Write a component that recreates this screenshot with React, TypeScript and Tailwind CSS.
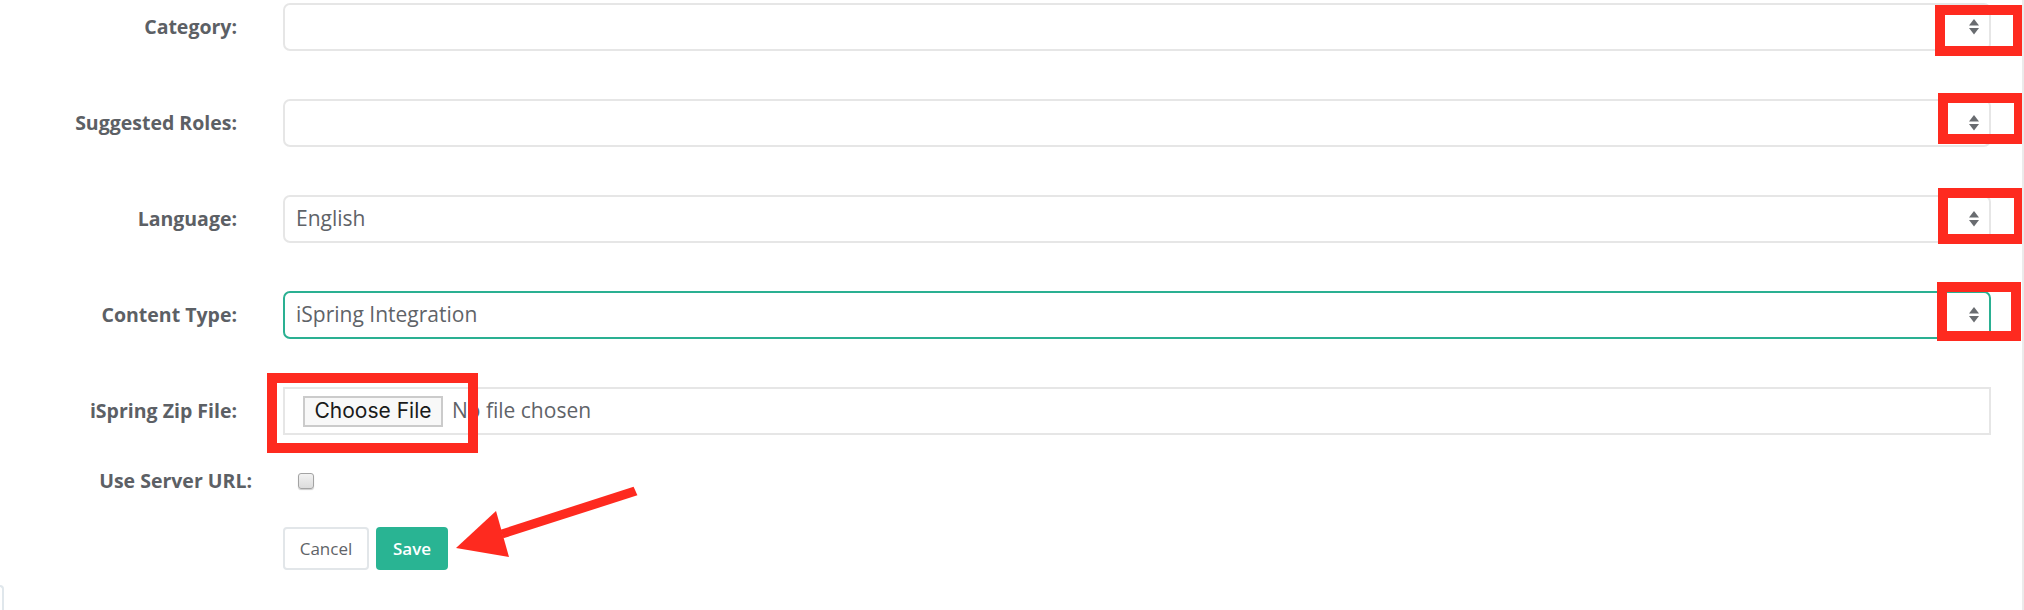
import React from "react";

const labelCls =
  "w-[237px] shrink-0 text-right font-bold text-[19.5px] text-[#5c6065] leading-none";

function Chevrons() {
  return (
    <svg width="10" height="16" viewBox="0 0 10 16" className="shrink-0">
      <polygon points="5,0 10,6.5 0,6.5" fill="#696c70" />
      <polygon points="0,9 10,9 5,15.5" fill="#696c70" />
    </svg>
  );
}

function SelectField({ value, active }: { value?: string; active?: boolean }) {
  return (
    <div
      className={
        "w-[1708px] h-[48px] rounded-[7px] border-2 flex items-center pl-[11px] pr-[10px] " +
        (active ? "border-[#2ab092]" : "border-[#e6e6e6]")
      }
    >
      <span className="flex-1 text-[21px] text-[#5f6368]">{value}</span>
      <Chevrons />
    </div>
  );
}

function Row({ label, children }: { label: string; children: React.ReactNode }) {
  return (
    <div className="flex items-center gap-[46px]">
      <div className={labelCls}>{label}</div>
      {children}
    </div>
  );
}

export default function App() {
  return (
    <div
      className="relative w-[2024px] h-[610px] bg-white overflow-hidden border-r-2 border-[#ebebeb]"
      style={{ fontFamily: '"Open Sans", sans-serif' }}
    >
      <div className="flex flex-col pt-[3px]">
        <div className="flex flex-col gap-[48px]">
          <Row label="Category:">
            <SelectField />
          </Row>
          <Row label="Suggested Roles:">
            <SelectField />
          </Row>
          <Row label="Language:">
            <SelectField value="English" />
          </Row>
          <Row label="Content Type:">
            <SelectField value="iSpring Integration" active />
          </Row>
          <Row label="iSpring Zip File:">
            <div className="w-[1708px] h-[48px] border-2 border-[#e6e6e6] flex items-center pl-[18px]">
              <div
                className="h-[31px] w-[140px] flex items-center justify-center border-2 border-[#cbcbcb] bg-[#f8f8f8] text-[21px] text-[#1a1a1a]"
                style={{ fontFamily: "Inter, sans-serif" }}
              >
                Choose File
              </div>
              <span className="ml-[9px] text-[21px] text-[#5f6368]">No file chosen</span>
            </div>
          </Row>
        </div>
        <div className="flex items-center gap-[46px] mt-[34px] h-[24px]">
          <div className="w-[252px] shrink-0 text-right font-bold text-[19.5px] text-[#5c6065] leading-none">
            Use Server URL:
          </div>
          <div className="w-[16px] h-[16px] rounded-[3px] border border-[#a3a3a3] bg-gradient-to-b from-[#f2f2f2] to-[#dcdcdc] shadow-[0_1px_1px_rgba(0,0,0,0.2)]" />
        </div>
        <div className="flex gap-[7px] ml-[283px] mt-[34px]">
          <div className="w-[86px] h-[43px] rounded-[4px] border-2 border-[#e2e6e9] flex items-center justify-center text-[17px] text-[#5f6368]">
            Cancel
          </div>
          <div className="w-[72px] h-[43px] rounded-[4px] bg-[#29b493] flex items-center justify-center text-[17px] font-semibold text-white">
            Save
          </div>
        </div>
        <div className="mt-[15px] w-[4px] h-[30px] border-t-2 border-r-2 border-[#e0e7ec] rounded-tr-[4px]" />
      </div>

      {/* annotation overlays */}
      <div className="absolute left-[1935px] top-[5px] w-[88px] h-[51px] border-[10px] border-[#fe2a1f]" />
      <div className="absolute left-[1938px] top-[93px] w-[86px] h-[51px] border-[10px] border-[#fe2a1f]" />
      <div className="absolute left-[1938px] top-[188px] w-[86px] h-[56px] border-[10px] border-[#fe2a1f]" />
      <div className="absolute left-[1937px] top-[282px] w-[84px] h-[59px] border-[10px] border-[#fe2a1f]" />
      <div className="absolute left-[267px] top-[373px] w-[211px] h-[80px] border-[10px] border-[#fe2a1f]" />
      <svg
        className="absolute left-0 top-0 pointer-events-none"
        width="2024"
        height="610"
        viewBox="0 0 2024 610"
      >
        <polygon
          points="637.4,495.3 633.6,486.7 500.6,529.7 503.4,538.3"
          fill="#fe2a1f"
        />
        <polygon points="456,548 496,511 509,557" fill="#fe2a1f" />
      </svg>
    </div>
  );
}
